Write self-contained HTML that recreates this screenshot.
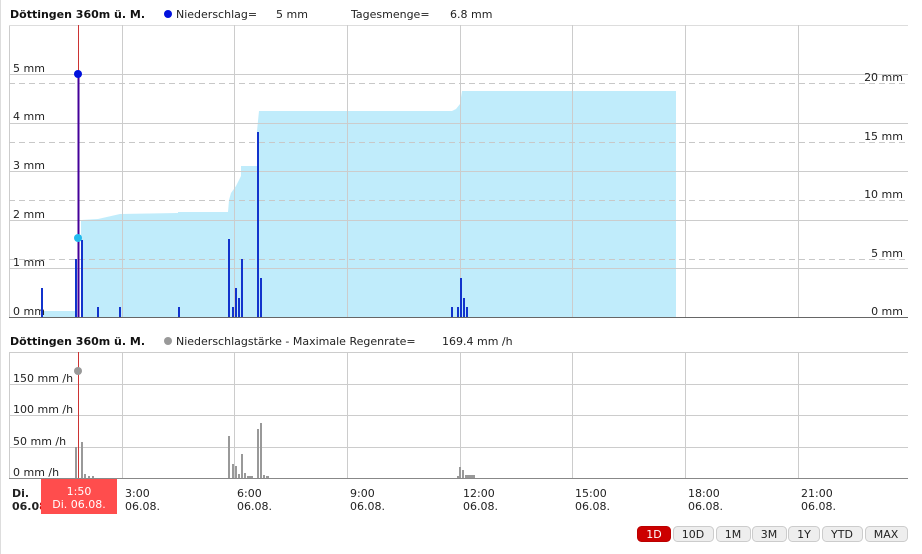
<!DOCTYPE html>
<html><head><meta charset="utf-8"><style>
html,body{margin:0;padding:0;background:#fff;width:922px;height:554px;overflow:hidden}
svg{display:block;font-family:"DejaVu Sans","Liberation Sans",sans-serif}
</style></head><body>
<svg width="922" height="554" viewBox="0 0 922 554" xmlns="http://www.w3.org/2000/svg">
<rect x="0" y="0" width="1" height="554" fill="#ddd"/>
<!-- header 1 -->
<text x="10" y="18" font-size="11" font-weight="bold" fill="#111">Döttingen 360m ü. M.</text>
<circle cx="168" cy="14" r="4" fill="#0011dd"/>
<text x="176" y="18" font-size="11" fill="#222">Niederschlag=</text>
<text x="276" y="18" font-size="11" fill="#222">5 mm</text>
<text x="351" y="18" font-size="11" fill="#222">Tagesmenge=</text>
<text x="450" y="18" font-size="11" fill="#222">6.8 mm</text>

<!-- top chart -->
<line x1="9.5" y1="25" x2="9.5" y2="318" stroke="#ccc"/>
<line x1="9" y1="25.5" x2="908" y2="25.5" stroke="#ddd"/>
<path d="M42,317 L42,311 L75,311 L75,317 Z M81,317 L81,220 L98,219 L120,214 L178,213 L178,212 L228,212 L229,200 L231,193 L236,186 L238,182 L241,176 L241,166 L257,166 L257,131 L259,111 L452,111 L456,109 L460,104 L462,91 L676,91 L676,317 Z" fill="#c0ecfb"/>
<g stroke="#ccc" stroke-width="1">
<line x1="9" y1="74.5" x2="908" y2="74.5"/>
<line x1="9" y1="123.5" x2="908" y2="123.5"/>
<line x1="9" y1="171.5" x2="908" y2="171.5"/>
<line x1="9" y1="220.5" x2="908" y2="220.5"/>
<line x1="9" y1="268.5" x2="908" y2="268.5"/>
<line x1="122.5" y1="25" x2="122.5" y2="317"/>
<line x1="234.5" y1="25" x2="234.5" y2="317"/>
<line x1="347.5" y1="25" x2="347.5" y2="317"/>
<line x1="460.5" y1="25" x2="460.5" y2="317"/>
<line x1="572.5" y1="25" x2="572.5" y2="317"/>
<line x1="685.5" y1="25" x2="685.5" y2="317"/>
<line x1="798.5" y1="25" x2="798.5" y2="317"/>
</g>
<g stroke="#c8c8c8" stroke-dasharray="6,4">
<line x1="9" y1="83.5" x2="908" y2="83.5"/>
<line x1="9" y1="142.5" x2="908" y2="142.5"/>
<line x1="9" y1="200.5" x2="908" y2="200.5"/>
<line x1="9" y1="259.5" x2="908" y2="259.5"/>
</g>
<line x1="9" y1="317.5" x2="908" y2="317.5" stroke="#666"/>
<g font-size="11" fill="#222">
<text x="13" y="72">5 mm</text><text x="13" y="120">4 mm</text><text x="13" y="169">3 mm</text>
<text x="13" y="218">2 mm</text><text x="13" y="266">1 mm</text><text x="13" y="315">0 mm</text>
<text x="903" y="81" text-anchor="end">20 mm</text><text x="903" y="140" text-anchor="end">15 mm</text>
<text x="903" y="198" text-anchor="end">10 mm</text><text x="903" y="257" text-anchor="end">5 mm</text>
<text x="903" y="315" text-anchor="end">0 mm</text>
</g>
<g fill="#1133cc">
<rect x="41" y="288" width="2" height="29"/>
<rect x="75" y="259" width="2" height="58"/>
<rect x="81" y="240" width="2" height="77"/>
<rect x="97" y="307" width="2" height="10"/>
<rect x="119" y="307" width="2" height="10"/>
<rect x="178" y="307" width="2" height="10"/>
<rect x="228" y="239" width="2" height="78"/>
<rect x="232" y="307" width="2" height="10"/>
<rect x="235" y="288" width="2" height="29"/>
<rect x="238" y="298" width="2" height="19"/>
<rect x="241" y="259" width="2" height="58"/>
<rect x="257" y="132" width="2" height="185"/>
<rect x="260" y="278" width="2" height="39"/>
<rect x="451" y="307" width="2" height="10"/>
<rect x="457" y="307" width="2" height="10"/>
<rect x="460" y="278" width="2" height="39"/>
<rect x="463" y="298" width="2" height="19"/>
<rect x="466" y="307" width="2" height="10"/>
</g>
<line x1="78.5" y1="25" x2="78.5" y2="74" stroke="#cc3333"/>
<line x1="78.5" y1="74" x2="78.5" y2="317" stroke="#440099" stroke-width="2"/>
<circle cx="78" cy="74" r="4" fill="#0011dd"/>
<circle cx="78" cy="238" r="4" fill="#22bbee"/>

<!-- header 2 -->
<text x="10" y="345" font-size="11" font-weight="bold" fill="#111">Döttingen 360m ü. M.</text>
<circle cx="168" cy="341" r="4" fill="#999"/>
<text x="176" y="345" font-size="11" fill="#222">Niederschlagstärke - Maximale Regenrate=</text>
<text x="442" y="345" font-size="11" fill="#222">169.4 mm /h</text>

<!-- bottom chart -->
<line x1="9.5" y1="352" x2="9.5" y2="478" stroke="#ccc"/>
<line x1="9" y1="352.5" x2="908" y2="352.5" stroke="#ccc"/>
<g stroke="#ccc">
<line x1="9" y1="384.5" x2="908" y2="384.5"/>
<line x1="9" y1="415.5" x2="908" y2="415.5"/>
<line x1="9" y1="447.5" x2="908" y2="447.5"/>
<line x1="122.5" y1="352" x2="122.5" y2="478"/>
<line x1="234.5" y1="352" x2="234.5" y2="478"/>
<line x1="347.5" y1="352" x2="347.5" y2="478"/>
<line x1="460.5" y1="352" x2="460.5" y2="478"/>
<line x1="572.5" y1="352" x2="572.5" y2="478"/>
<line x1="685.5" y1="352" x2="685.5" y2="478"/>
<line x1="798.5" y1="352" x2="798.5" y2="478"/>
</g>
<g font-size="11" fill="#222">
<text x="13" y="382">150 mm /h</text><text x="13" y="413">100 mm /h</text>
<text x="13" y="445">50 mm /h</text><text x="13" y="476">0 mm /h</text>
</g>
<g fill="#999">
<rect x="75" y="447" width="2" height="31"/>
<rect x="81" y="442" width="2" height="36"/>
<rect x="84" y="474" width="2" height="4"/>
<rect x="88" y="476" width="2" height="2"/>
<rect x="92" y="476" width="2" height="2"/>
<rect x="228" y="436" width="2" height="42"/>
<rect x="232" y="464" width="2" height="14"/>
<rect x="235" y="466" width="2" height="12"/>
<rect x="238" y="474" width="2" height="4"/>
<rect x="241" y="454" width="2" height="24"/>
<rect x="244" y="473" width="2" height="5"/>
<rect x="247" y="476" width="6" height="2"/>
<rect x="257" y="429" width="2" height="49"/>
<rect x="260" y="423" width="2" height="55"/>
<rect x="263" y="475" width="2" height="3"/>
<rect x="266" y="476" width="3" height="2"/>
<rect x="457" y="476" width="2" height="2"/>
<rect x="459" y="467" width="2" height="11"/>
<rect x="462" y="470" width="2" height="8"/>
<rect x="465" y="475" width="10" height="3"/>
</g>
<line x1="78.5" y1="352" x2="78.5" y2="478" stroke="#cc3333"/>
<circle cx="78" cy="371" r="4" fill="#999"/>
<line x1="9" y1="478.5" x2="908" y2="478.5" stroke="#888"/>

<!-- x labels -->
<g font-size="11" fill="#222">
<text x="12" y="497" font-weight="bold">Di.</text>
<text x="12" y="510" font-weight="bold">06.0<tspan fill="#cc0000">8.</tspan></text>
<text x="125" y="497">3:00</text><text x="125" y="510">06.08.</text>
<text x="237" y="497">6:00</text><text x="237" y="510">06.08.</text>
<text x="350" y="497">9:00</text><text x="350" y="510">06.08.</text>
<text x="463" y="497">12:00</text><text x="463" y="510">06.08.</text>
<text x="575" y="497">15:00</text><text x="575" y="510">06.08.</text>
<text x="688" y="497">18:00</text><text x="688" y="510">06.08.</text>
<text x="801" y="497">21:00</text><text x="801" y="510">06.08.</text>
</g>
<rect x="41" y="479" width="76" height="35" fill="#ff4d4d"/>
<text x="79" y="495" font-size="11" fill="#fff" text-anchor="middle">1:50</text>
<text x="79" y="508" font-size="11" fill="#fff" text-anchor="middle">Di. 06.08.</text>

<!-- buttons -->
<g font-size="11" text-anchor="middle">
<rect x="637.5" y="526.5" width="33" height="15" rx="4" fill="#cc0000" stroke="#b00"/>
<text x="654" y="538" fill="#fff">1D</text>
<rect x="673.5" y="526.5" width="40" height="15" rx="4" fill="#eee" stroke="#ccc"/>
<text x="693" y="538" fill="#222">10D</text>
<rect x="716.5" y="526.5" width="34" height="15" rx="4" fill="#eee" stroke="#ccc"/>
<text x="733" y="538" fill="#222">1M</text>
<rect x="752.5" y="526.5" width="34" height="15" rx="4" fill="#eee" stroke="#ccc"/>
<text x="769" y="538" fill="#222">3M</text>
<rect x="788.5" y="526.5" width="31" height="15" rx="4" fill="#eee" stroke="#ccc"/>
<text x="804" y="538" fill="#222">1Y</text>
<rect x="822.5" y="526.5" width="40" height="15" rx="4" fill="#eee" stroke="#ccc"/>
<text x="842" y="538" fill="#222">YTD</text>
<rect x="865.5" y="526.5" width="42" height="15" rx="4" fill="#eee" stroke="#ccc"/>
<text x="886" y="538" fill="#222">MAX</text>
</g>
</svg>
</body></html>
